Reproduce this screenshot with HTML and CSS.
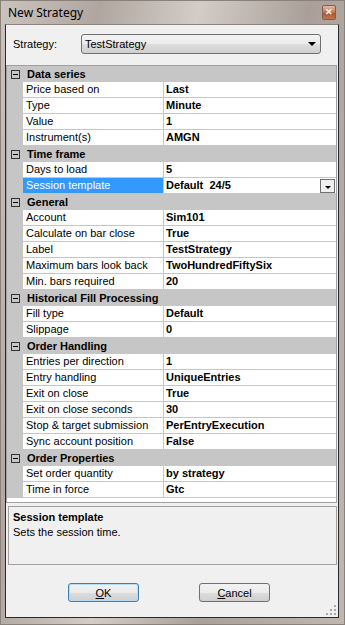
FILE: index.html
```html
<!DOCTYPE html>
<html>
<head>
<meta charset="utf-8">
<link rel="stylesheet" href="styles.css">
</head>
<body>
<div class="window">
  <div class="titlebar">
    <span class="title">New Strategy</span>
    <span class="close">&#x2715;</span>
  </div>
  <div class="client">
    <div class="strategy-row">
      <span class="strategy-label">Strategy:</span>
      <div class="combo">
        <span>TestStrategy</span>
        <span class="arrow"></span>
      </div>
    </div>

    <div class="grid">
      <div class="cat"><span class="gutter"><span class="expander"></span></span>Data series</div>
      <div class="prop"><span class="gutter"></span><span class="name">Price based on</span><span class="val">Last</span></div>
      <div class="prop"><span class="gutter"></span><span class="name">Type</span><span class="val">Minute</span></div>
      <div class="prop"><span class="gutter"></span><span class="name">Value</span><span class="val">1</span></div>
      <div class="prop"><span class="gutter"></span><span class="name">Instrument(s)</span><span class="val">AMGN</span></div>

      <div class="cat"><span class="gutter"><span class="expander"></span></span>Time frame</div>
      <div class="prop"><span class="gutter"></span><span class="name">Days to load</span><span class="val">5</span></div>
      <div class="prop selected"><span class="gutter"></span><span class="name">Session template</span><span class="val">Default&nbsp; 24/5<span class="drop"></span></span></div>

      <div class="cat"><span class="gutter"><span class="expander"></span></span>General</div>
      <div class="prop"><span class="gutter"></span><span class="name">Account</span><span class="val">Sim101</span></div>
      <div class="prop"><span class="gutter"></span><span class="name">Calculate on bar close</span><span class="val">True</span></div>
      <div class="prop"><span class="gutter"></span><span class="name">Label</span><span class="val">TestStrategy</span></div>
      <div class="prop"><span class="gutter"></span><span class="name">Maximum bars look back</span><span class="val">TwoHundredFiftySix</span></div>
      <div class="prop"><span class="gutter"></span><span class="name">Min. bars required</span><span class="val">20</span></div>

      <div class="cat"><span class="gutter"><span class="expander"></span></span>Historical Fill Processing</div>
      <div class="prop"><span class="gutter"></span><span class="name">Fill type</span><span class="val">Default</span></div>
      <div class="prop"><span class="gutter"></span><span class="name">Slippage</span><span class="val">0</span></div>

      <div class="cat"><span class="gutter"><span class="expander"></span></span>Order Handling</div>
      <div class="prop"><span class="gutter"></span><span class="name">Entries per direction</span><span class="val">1</span></div>
      <div class="prop"><span class="gutter"></span><span class="name">Entry handling</span><span class="val">UniqueEntries</span></div>
      <div class="prop"><span class="gutter"></span><span class="name">Exit on close</span><span class="val">True</span></div>
      <div class="prop"><span class="gutter"></span><span class="name">Exit on close seconds</span><span class="val">30</span></div>
      <div class="prop"><span class="gutter"></span><span class="name">Stop &amp; target submission</span><span class="val">PerEntryExecution</span></div>
      <div class="prop"><span class="gutter"></span><span class="name">Sync account position</span><span class="val">False</span></div>

      <div class="cat"><span class="gutter"><span class="expander"></span></span>Order Properties</div>
      <div class="prop"><span class="gutter"></span><span class="name">Set order quantity</span><span class="val">by strategy</span></div>
      <div class="prop"><span class="gutter"></span><span class="name">Time in force</span><span class="val">Gtc</span></div>
    </div>

    <div class="desc">
      <div class="desc-title">Session template</div>
      <div>Sets the session time.</div>
    </div>

    <div class="buttons">
      <button class="btn focus"><u>O</u>K</button>
      <button class="btn"><u>C</u>ancel</button>
    </div>

    <!-- size grip -->
    <svg class="grip" width="12" height="12" viewBox="0 0 12 12">
      <rect x="9" y="1" width="2" height="2" fill="#a8a8a8"/>
      <rect x="5" y="5" width="2" height="2" fill="#a8a8a8"/>
      <rect x="9" y="5" width="2" height="2" fill="#a8a8a8"/>
      <rect x="1" y="9" width="2" height="2" fill="#a8a8a8"/>
      <rect x="5" y="9" width="2" height="2" fill="#a8a8a8"/>
      <rect x="9" y="9" width="2" height="2" fill="#a8a8a8"/>
    </svg>
  </div>
</div>
</body>
</html>
```

FILE: styles.css
```css
body {
  margin: 0;
  font-family: "Liberation Sans", Arial, sans-serif;
  font-size: 11px;
  color: #000;
}

/* window frame (win7 basic look) */
.window {
  width: 345px;
  height: 625px;
  box-sizing: border-box;
  display: flex;
  flex-direction: column;
  background: linear-gradient(100deg, #cbc3bd 0%, #b0a69f 22%, #d3ccc7 44%, #aaa099 68%, #c0b7b1 100%);
  box-shadow: inset 0 0 0 1px #8a817b;
}
.titlebar {
  height: 24px;
  flex: none;
  display: flex;
  align-items: center;
  justify-content: space-between;
  padding: 0 9px 0 8px;
}
.title {
  font-family: "Noto Sans", "Open Sans", sans-serif;
  font-size: 12px;
}
.close {
  width: 14px;
  height: 15px;
  box-sizing: border-box;
  border: 1px solid #7d5f4f;
  border-radius: 2px;
  background: linear-gradient(#e4bba4, #c77149 50%, #a9522c 51%, #c5774f);
  color: #fff;
  font-size: 9px;
  font-weight: bold;
  display: flex;
  align-items: center;
  justify-content: center;
}
.client {
  flex: 1;
  margin: 0 6px 7px 5px;
  border: 1px solid #2b2b2b;
  border-top-color: #8d8680;
  background: #f0f0f0;
  position: relative;
  display: flex;
  flex-direction: column;
}

/* strategy selector */
.strategy-row {
  margin-top: 9px;
  height: 20px;
  display: flex;
  align-items: center;
  padding-left: 7px;
}
.strategy-label {
  width: 68px;
}
.combo {
  width: 240px;
  height: 20px;
  box-sizing: border-box;
  border: 1px solid #707070;
  border-radius: 3px;
  background: linear-gradient(#f2f2f2 0%, #ebebeb 50%, #dddddd 51%, #cfcfcf 100%);
  display: flex;
  align-items: center;
  justify-content: space-between;
  padding: 0 4px 0 3px;
}
.arrow {
  width: 0;
  height: 0;
  border-left: 4px solid transparent;
  border-right: 4px solid transparent;
  border-top: 4px solid #000;
}

/* property grid */
.grid {
  margin: 11px 1px 0 0;
  border: 1px solid #a0a0a0;
  background: #fff;
  padding-bottom: 4px;
}
.gutter {
  width: 16px;
  flex: none;
  align-self: stretch;
  background: #c6c6c6;
  display: flex;
  align-items: center;
  justify-content: center;
}
.cat {
  height: 16px;
  display: flex;
  align-items: center;
  background: #c6c6c6;
  font-weight: bold;
}
.cat .gutter {
  margin-right: 4px;
}
.expander {
  width: 9px;
  height: 9px;
  box-sizing: border-box;
  border: 1px solid #333;
  display: flex;
  align-items: center;
  justify-content: center;
}
.expander::after {
  content: '';
  width: 5px;
  height: 1px;
  background: #000;
}
.prop {
  height: 16px;
  display: flex;
}
.name,
.val {
  box-sizing: border-box;
  border-bottom: 1px solid #c6c6c6;
  line-height: 15px;
  white-space: nowrap;
  overflow: hidden;
}
.name {
  width: 141px;
  border-right: 1px solid #c6c6c6;
  padding-left: 3px;
}
.val {
  flex: 1;
  padding-left: 2px;
  font-weight: bold;
  display: flex;
  align-items: center;
}
.selected .name {
  background: #3399ff;
  color: #fff;
}
.drop {
  margin-left: auto;
  margin-right: 1px;
  width: 15px;
  height: 14px;
  box-sizing: border-box;
  border: 1px solid #707070;
  background: #f0f0f0;
  display: flex;
  align-items: flex-end;
  justify-content: center;
  padding-bottom: 3px;
}
.drop::after {
  content: '';
  border-left: 3px solid transparent;
  border-right: 3px solid transparent;
  border-top: 3px solid #000;
}

/* description pane */
.desc {
  margin: 3px 1px 0 2px;
  height: 59px;
  box-sizing: border-box;
  border: 1px solid #a59f9b;
  padding: 3px 4px;
  line-height: 15px;
}
.desc-title {
  font-weight: bold;
}

/* buttons */
.buttons {
  margin-top: 18px;
  display: flex;
  gap: 60px;
  padding-left: 62px;
}
.btn {
  width: 71px;
  height: 19px;
  box-sizing: border-box;
  border: 1px solid #707070;
  border-radius: 3px;
  background: linear-gradient(#f2f2f2 0%, #ebebeb 50%, #dddddd 51%, #cfcfcf 100%);
  font-family: "Liberation Sans", Arial, sans-serif;
  font-size: 11px;
  color: #000;
  padding: 0;
}
.btn.focus {
  border-color: #3c7fb1;
  box-shadow: inset 0 0 0 1px #b8dcf6;
}
.grip {
  position: absolute;
  right: 1px;
  bottom: 1px;
}
```
